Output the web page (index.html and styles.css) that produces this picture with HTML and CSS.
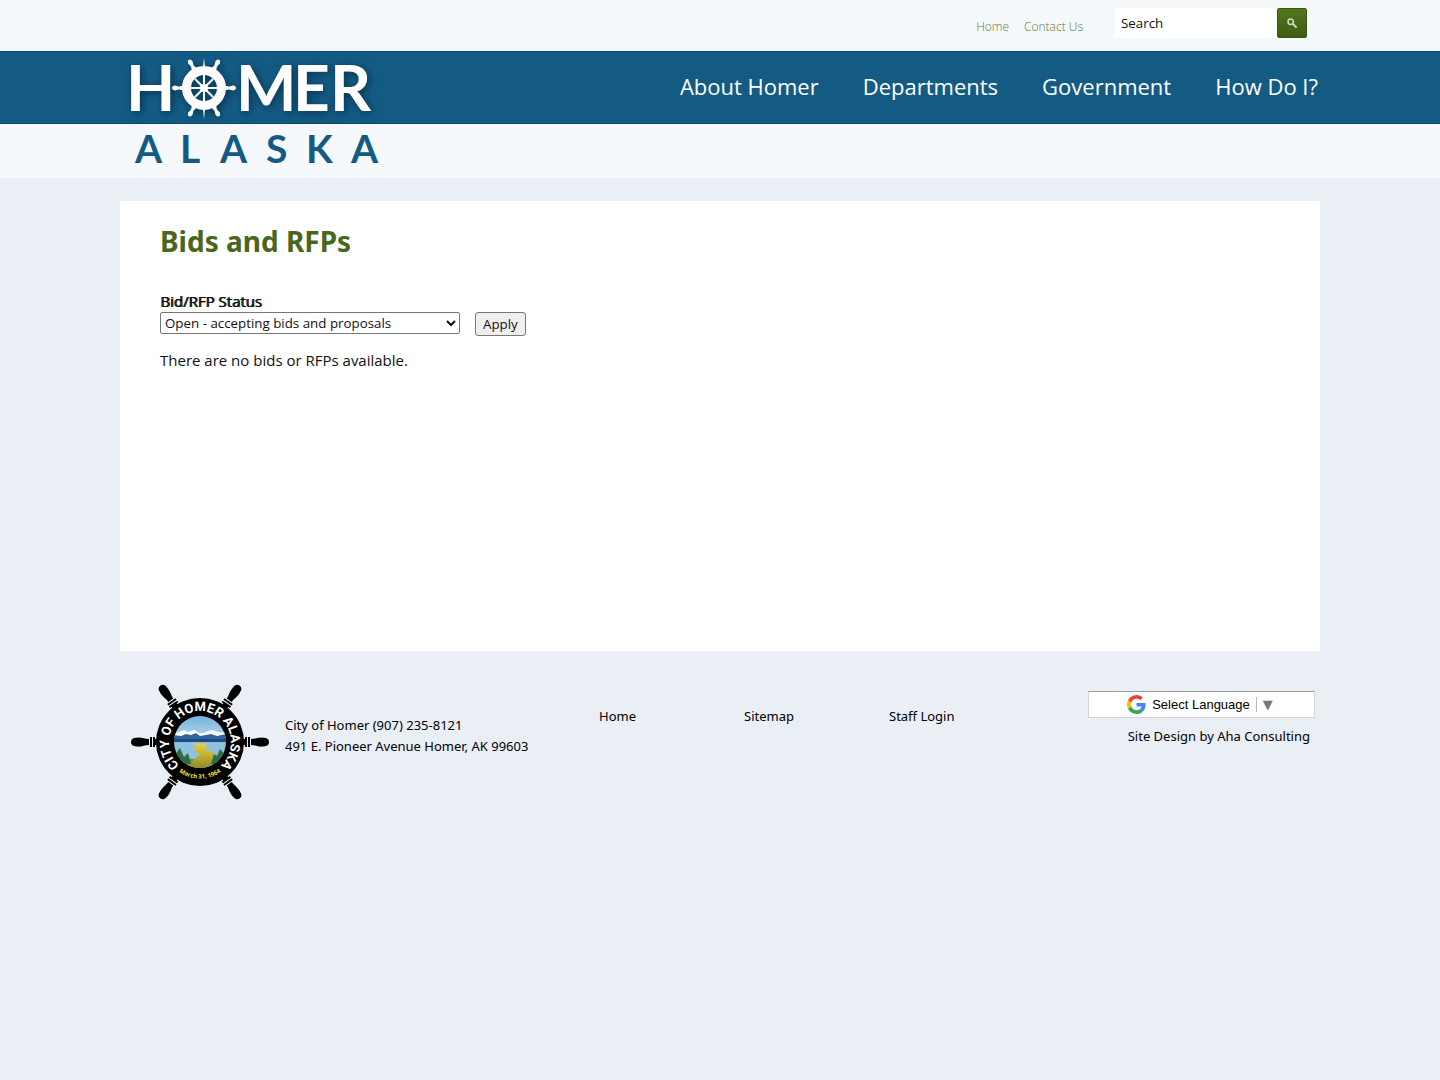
FILE: index.html
```html
<!DOCTYPE html>
<html lang="en">
<head>
<meta charset="utf-8">
<meta name="viewport" content="width=device-width, initial-scale=1">
<title>Bids and RFPs | City of Homer Alaska</title>
<link rel="stylesheet" href="styles.css">
</head>
<body>
<header class="site-header">
  <div class="container utility">
    <nav class="utility-links" aria-label="Utility">
      <a href="#">Home</a>
      <a href="#">Contact Us</a>
    </nav>
    <form class="search" role="search">
      <input class="search-box" type="text" value="Search" aria-label="Search this site">
      <button class="search-button" type="button" aria-label="Search">
        <svg width="10" height="10" viewBox="0 0 10 10" aria-hidden="true"><circle cx="3.7" cy="3.7" r="2.7" fill="none" stroke="#d3dfbc" stroke-width="1.5"/><path d="M5.8 5.8 9 9" stroke="#d3dfbc" stroke-width="1.8" stroke-linecap="round"/></svg>
      </button>
    </form>
  </div>
  <div class="band">
    <div class="container band-inner">
      <a class="logo" href="#" aria-label="Homer Alaska">
        <svg width="270" height="120" viewBox="120 51 270 120" aria-hidden="true">
          <g class="logo-city">
            <text x="126" y="110">H</text>
            <text x="236" y="110">M</text>
            <text x="293" y="110">E</text>
            <text x="330" y="110">R</text>
            <g transform="translate(204 87)">
              <circle r="17.5" fill="none" stroke="#fff" stroke-width="9"/>
              <g fill="#fff">
                <path id="knob" d="M21-2H24V-1.2L29-2.4Q32-2 32 0T29 2.4L24 1.2V2H21Z"/>
                <use href="#knob" transform="rotate(62)"/>
                <use href="#knob" transform="rotate(118)"/>
                <use href="#knob" transform="rotate(180)"/>
                <use href="#knob" transform="rotate(242)"/>
                <use href="#knob" transform="rotate(298)"/>
                <path d="M-1-21 0-30 1-21ZM-1 21 0 31 1 21Z"/>
              </g>
              <path d="M-13 0H13M0-13V13M-9-9 9 9M-9 9 9-9" stroke="#fff" stroke-width="2"/>
              <circle r="4" fill="#fff"/>
            </g>
          </g>
          <g class="logo-state">
            <text x="135" y="162">A</text>
            <text x="180" y="162">L</text>
            <text x="220" y="162">A</text>
            <text x="266" y="162">S</text>
            <text x="306" y="162">K</text>
            <text x="351" y="162">A</text>
          </g>
        </svg>
      </a>
      <nav class="main-nav" aria-label="Main">
        <a href="#">About Homer</a>
        <a href="#">Departments</a>
        <a href="#">Government</a>
        <a href="#">How Do I?</a>
      </nav>
    </div>
  </div>
</header>

<main class="container content">
  <h1>Bids and RFPs</h1>
  <form class="filter">
    <div class="field">
      <label for="status">Bid/RFP Status</label>
      <select id="status">
        <option>Open - accepting bids and proposals</option>
        <option>Closed</option>
        <option>Awarded</option>
      </select>
    </div>
    <button class="apply" type="button">Apply</button>
  </form>
  <p>There are no bids or RFPs available.</p>
</main>

<footer class="container footer">
  <svg class="seal" width="140" height="118" viewBox="-70 -58 140 118" role="img" aria-label="City of Homer seal">
    <defs>
      <clipPath id="scene"><circle r="26"/></clipPath>
      <path id="arc-top" d="M-22 22A31 31 0 1 1 22 22"/>
      <path id="arc-bottom" d="M-33 15A36 36 0 0 0 33 15"/>
      <linearGradient id="sky" x1="0" y1="0" x2="0" y2="1"><stop offset="0" stop-color="#75b1da"/><stop offset="1" stop-color="#a9d2ea"/></linearGradient>
      <linearGradient id="sand" x1="0" y1="0" x2="0" y2="1"><stop offset="0" stop-color="#ecd23c"/><stop offset="1" stop-color="#8f8a2c"/></linearGradient>
      <g id="handle">
        <path d="M42-3H46V3H42Z"/>
        <path d="M45-5H47V5H45ZM48-5H50V5H48Z"/>
        <path d="M51-3Q54-3 57-4Q61-5 66-4Q69-3 69 0T66 4Q61 5 57 4Q54 3 51 3Z"/>
      </g>
    </defs>
    <use href="#handle"/>
    <use href="#handle" transform="rotate(55)"/>
    <use href="#handle" transform="rotate(125)"/>
    <use href="#handle" transform="rotate(180)"/>
    <use href="#handle" transform="rotate(235)"/>
    <use href="#handle" transform="rotate(305)"/>
    <circle r="44"/>
    <g clip-path="url(#scene)">
      <path d="M-26-26H26V-7H-26Z" fill="url(#sky)"/>
      <path d="M-26-8-21-10-16-12-12-10-6-12-1-9 4-9 8-11 13-12 18-10 26-9V-4H-26Z" fill="#fff"/>
      <path d="M-26-7-19-6-14-8-9-7-4-9 0-6 6-7 11-8 17-6 26-8V0H-26Z" fill="#2f669f"/>
      <path d="M-26-3H26V0H-26Z" fill="#1f4a80"/>
      <path d="M-26 0H26V26H-26Z" fill="#8fc2dc"/>
      <path d="M-26 11-16 15-8 17 8 17 26 11V26H-26Z" fill="#76923c"/>
      <path d="M-7 2Q4 0 7 4Q8 6 2 7Q12 8 14 12Q16 17 11 26H-11Q-9 19-3 15Q2 12-5 9Q-9 7-2 5Z" fill="url(#sand)"/>
      <path d="M-26 14-20 6-16 15-12 11-9 22H-26ZM26 14 20 7 17 14 14 12 11 22H26Z" fill="#2f6b43"/>
    </g>
    <text class="seal-name"><textPath href="#arc-top" startOffset="50%">CITY OF HOMER ALASKA</textPath></text>
    <text class="seal-date"><textPath href="#arc-bottom" startOffset="50%">March 31, 1964</textPath></text>
  </svg>
  <address class="address">City of Homer (907) 235-8121<br>491 E. Pioneer Avenue Homer, AK 99603</address>
  <nav class="footer-nav" aria-label="Footer">
    <a href="#">Home</a>
    <a href="#">Sitemap</a>
    <a href="#">Staff Login</a>
  </nav>
  <div class="footer-end">
    <a class="translate" href="#">
      <svg width="19" height="19" viewBox="0 0 48 48" aria-hidden="true">
        <path fill="#ea4335" d="M24 9.500c3.540 0 6.710 1.220 9.210 3.600l6.850-6.850C35.900 2.380 30.470 0 24 0 14.620 0 6.510 5.380 2.560 13.220l7.980 6.190C12.430 13.720 17.740 9.500 24 9.500z"/>
        <path fill="#4285f4" d="M46.980 24.550c0-1.570-.15-3.090-.38-4.550H24v9.020h12.940c-.58 2.960-2.260 5.480-4.780 7.180l7.730 6c4.510-4.180 7.090-10.360 7.090-17.650z"/>
        <path fill="#fbbc05" d="M10.530 28.590A14.500 14.500 0 0 1 9.770 24c0-1.600.27-3.140.76-4.590l-7.980-6.190A23.900 23.900 0 0 0 0 24c0 3.880.92 7.540 2.560 10.780z"/>
        <path fill="#34a853" d="M24 48c6.480 0 11.930-2.130 15.890-5.810l-7.730-6C30.010 37.640 27.240 38.490 24 38.490c-6.260 0-11.570-4.220-13.470-9.910l-7.970 6.190C6.510 42.620 14.620 48 24 48z"/>
      </svg>
      <span>Select Language</span>
      <span class="translate-arrow">▼</span>
    </a>
    <a href="#">Site Design by Aha Consulting</a>
  </div>
</footer>
</body>
</html>
```

FILE: styles.css
```css
* {
  box-sizing: border-box;
}

body {
  margin: 0;
  background: #eaeef5;
  color: #111;
  font: 15px/21px "Open Sans", sans-serif;
}

a {
  color: inherit;
  text-decoration: none;
}

button,
input,
select {
  color: #111;
  font-family: "Open Sans", sans-serif;
}

.container {
  max-width: 1200px;
  margin: 0 auto;
}

/* Header */
.site-header {
  background: #f5f9fc;
  padding-bottom: 54px;
}

.utility {
  display: flex;
  justify-content: flex-end;
  gap: 32px;
  height: 51px;
  padding: 8px 13px 0 0;
}

.utility-links {
  display: flex;
  gap: 15px;
  padding-top: 8px;
  color: #5c7a38;
  font-size: 12px;
  font-weight: 300;
}

.search {
  display: flex;
  height: 30px;
}

.search-box {
  width: 162px;
  padding: 0 6px;
  border: 0;
  background: #fff;
}

.search-button {
  display: grid;
  place-items: center;
  width: 30px;
  padding: 0;
  border: 1px solid #3c5415;
  border-radius: 2px;
  background: linear-gradient(#54771d, #3f5a14);
}

.band {
  background: #145b84;
  border-top: 1px solid #0f4a6e;
  border-bottom: 1px solid #0f4a6e;
}

.band-inner {
  display: flex;
  justify-content: space-between;
  min-height: 71px;
}

.logo {
  height: 71px;
}

.logo svg {
  display: block;
  overflow: visible;
}

.logo-city {
  fill: #fff;
  font: 700 64px Lato, sans-serif;
  filter: drop-shadow(2px 2px 4px rgba(0, 25, 45, 0.6));
}

.logo-state {
  fill: #145b84;
  font: 700 39px Lato, sans-serif;
}

.main-nav {
  display: flex;
  flex-wrap: wrap;
  gap: 44px;
  padding: 19px 2px 0 0;
  color: #fff;
  font-size: 22px;
  line-height: 30px;
}

/* Page content */
.content {
  min-height: 450px;
  margin-top: 23px;
  padding: 20px 40px;
  background: #fff;
}

h1 {
  margin: 0 0 30px;
  color: #4a661b;
  font: 700 28px/40px "Noto Sans", sans-serif;
}

.filter {
  display: flex;
  align-items: flex-end;
  gap: 15px;
}

.field {
  display: flex;
  flex-direction: column;
  width: 300px;
  padding-bottom: 2px;
}

.field label {
  text-shadow: 1px 0 0 #111;
}

.field select {
  height: 22px;
  padding: 0;
  border: 1px solid #767676;
  border-radius: 2px;
  background-color: #fff;
}

.apply {
  height: 24px;
  padding: 0 7px;
  border: 1px solid #767676;
  border-radius: 3px;
  background: #efefef;
}

.content p {
  margin: 14px 0;
}

/* Footer */
.footer {
  display: flex;
  flex-wrap: wrap;
  align-items: flex-start;
  padding: 33px 5px 40px 10px;
  color: #000;
  font: 13px/21px "Noto Sans", sans-serif;
}

.address {
  width: 314px;
  margin-left: 15px;
  padding-top: 31px;
  font-style: normal;
}

.footer-nav {
  display: grid;
  grid-template-columns: repeat(3, 145px);
  padding-top: 22px;
}

.footer-end {
  display: flex;
  flex-direction: column;
  align-items: flex-end;
  gap: 8px;
  margin-left: auto;
  padding-top: 7px;
}

.footer-end > a:last-child {
  padding-right: 5px;
}

.translate {
  display: flex;
  align-items: center;
  justify-content: center;
  gap: 6px;
  width: 227px;
  height: 27px;
  padding-right: 3px;
  border: 1px solid #d5d5d5;
  border-top-color: #9b9b9b;
  background: #fff;
  font: 13px/15px "Liberation Sans", Arial, sans-serif;
}

.translate-arrow {
  padding-left: 6px;
  border-left: 1px solid #bbb;
  color: #767676;
  font-family: "DejaVu Sans", sans-serif;
}

.seal-name {
  fill: #fff;
  font: 700 13px Roboto, sans-serif;
  text-anchor: middle;
}

.seal-date {
  fill: #f2e53a;
  font: 700 6px "Open Sans", sans-serif;
  text-anchor: middle;
}
```
